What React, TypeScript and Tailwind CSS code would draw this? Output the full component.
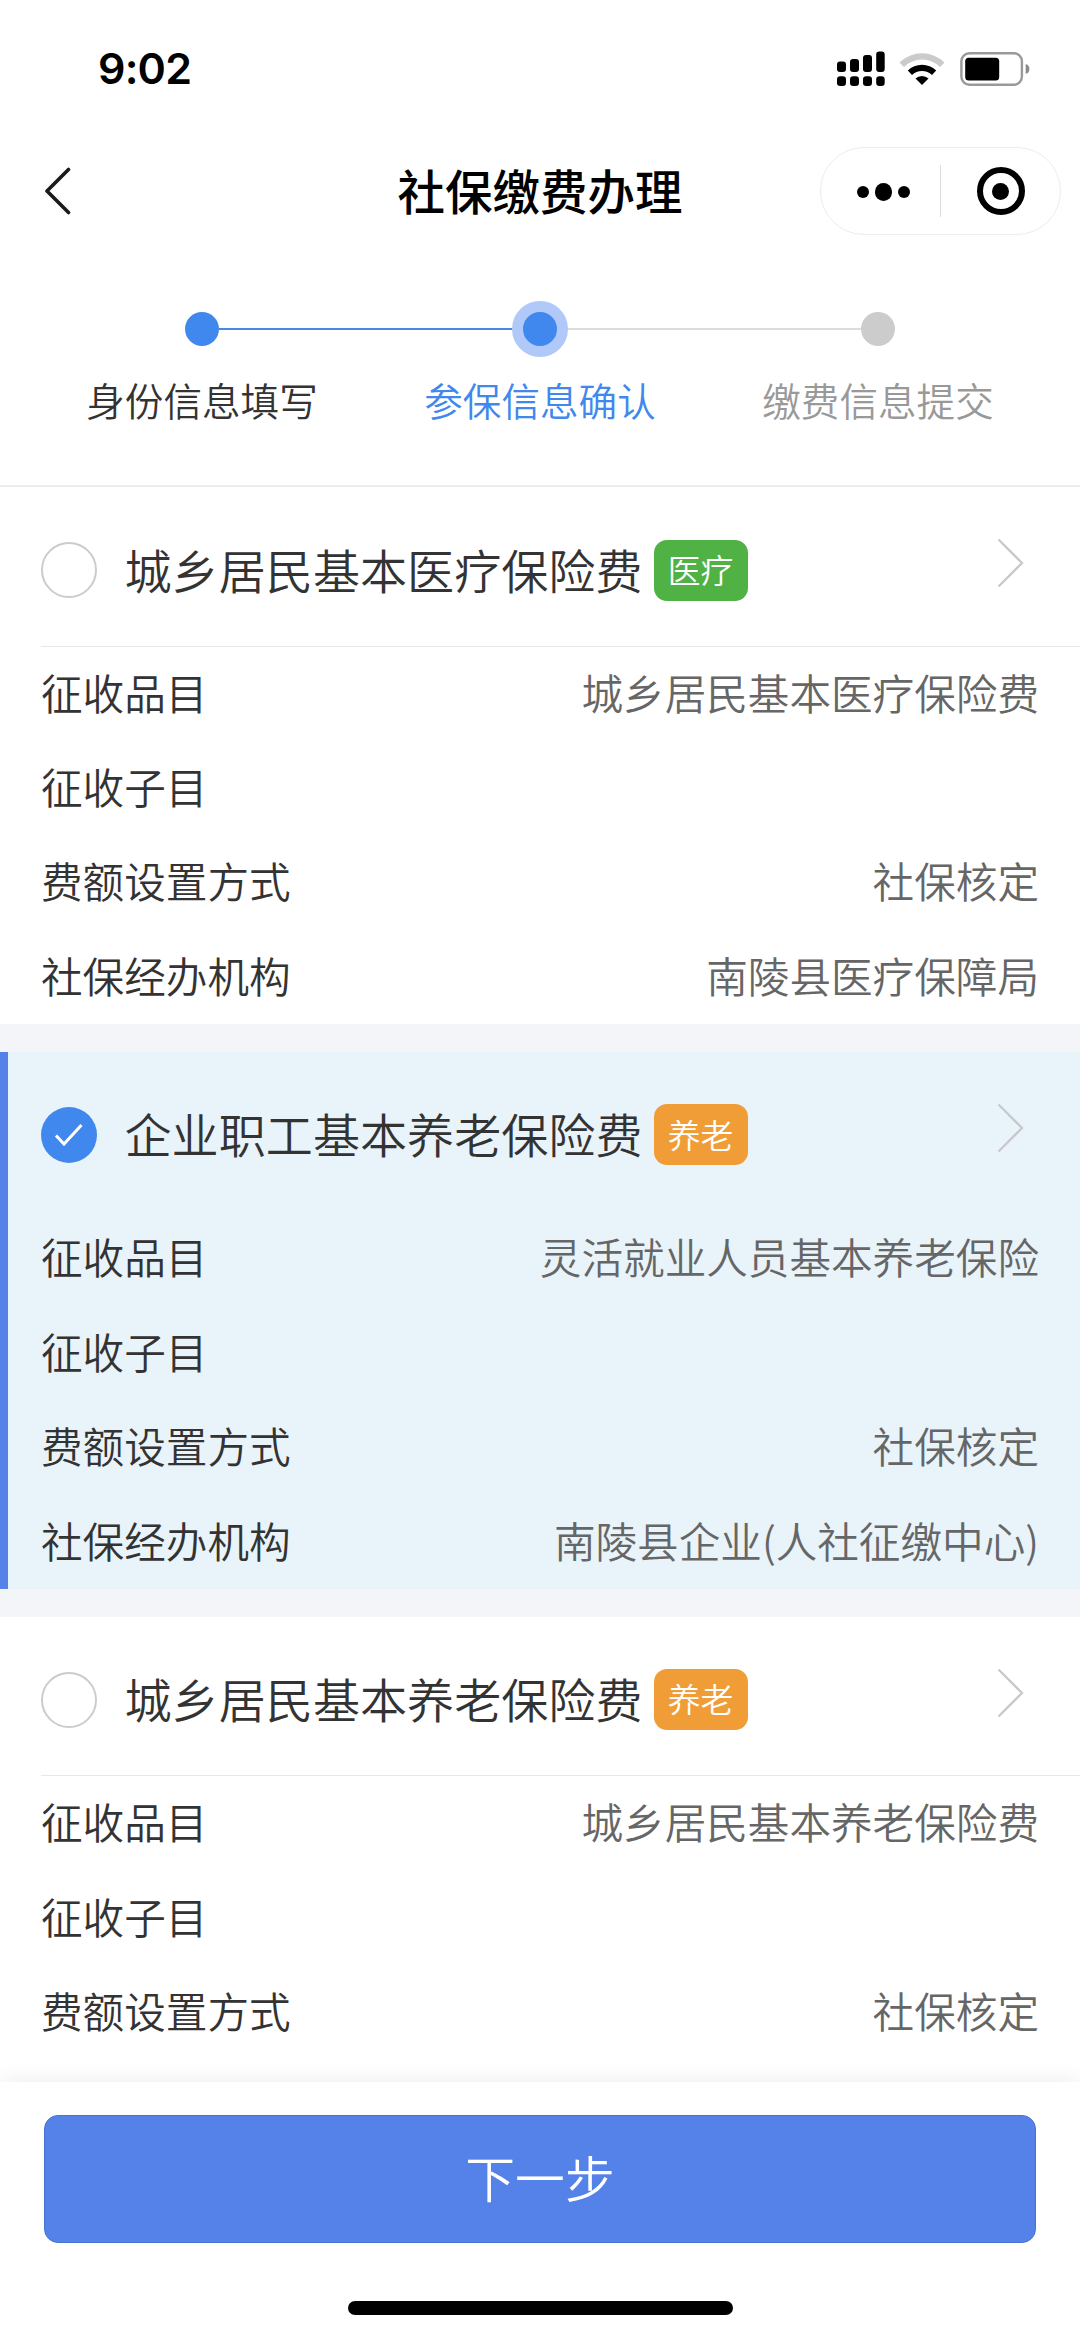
import clsx from 'clsx';

interface Field {
  label: string;
  value: string;
}

interface Insurance {
  title: string;
  tag: '医疗' | '养老';
  fields: Field[];
}

const steps = ['身份信息填写', '参保信息确认', '缴费信息提交'];
const currentStep = 1;
const selectedIndex = 1;

const insurances: Insurance[] = [
  {
    title: '城乡居民基本医疗保险费',
    tag: '医疗',
    fields: [
      { label: '征收品目', value: '城乡居民基本医疗保险费' },
      { label: '征收子目', value: '' },
      { label: '费额设置方式', value: '社保核定' },
      { label: '社保经办机构', value: '南陵县医疗保障局' },
    ],
  },
  {
    title: '企业职工基本养老保险费',
    tag: '养老',
    fields: [
      { label: '征收品目', value: '灵活就业人员基本养老保险' },
      { label: '征收子目', value: '' },
      { label: '费额设置方式', value: '社保核定' },
      { label: '社保经办机构', value: '南陵县企业(人社征缴中心)' },
    ],
  },
  {
    title: '城乡居民基本养老保险费',
    tag: '养老',
    fields: [
      { label: '征收品目', value: '城乡居民基本养老保险费' },
      { label: '征收子目', value: '' },
      { label: '费额设置方式', value: '社保核定' },
    ],
  },
];

const SignalIcon = () => (
  <svg width="48" height="35" viewBox="0 0 48 35">
    <rect x="0" y="10.5" width="9" height="10.5" rx="3" />
    <rect x="13" y="8" width="9" height="13" rx="3" />
    <rect x="26" y="4" width="9" height="17" rx="3" />
    <rect x="39.2" y="0.5" width="8.5" height="20.5" rx="3" />
    <rect x="0" y="25.3" width="9" height="9.7" rx="3.2" />
    <rect x="13" y="25.3" width="9" height="9.7" rx="3.2" />
    <rect x="26" y="25.3" width="9" height="9.7" rx="3.2" />
    <rect x="39.2" y="25.3" width="8.5" height="9.7" rx="3.2" />
  </svg>
);

const WifiIcon = () => (
  <svg width="46" height="34" viewBox="0 0 46 34">
    <path d="M0.5 10.5 A32 32 0 0 1 45.5 10.5 L41 15 A25.6 25.6 0 0 0 5 15 Z" fill="#cbcbcb" />
    <path d="M8.8 18.6 A20.3 20.3 0 0 1 37.2 18.6 L33 23 A14.2 14.2 0 0 0 13 23 Z" />
    <path d="M16.5 26.5 A9.4 9.4 0 0 1 29.5 26.5 L23 33 Z" />
  </svg>
);

const BatteryIcon = () => (
  <svg width="70" height="34" viewBox="0 0 70 34">
    <rect x="1.4" y="1.2" width="60.5" height="31.6" rx="8" fill="none" stroke="#999" strokeWidth="2.4" />
    <rect x="5.2" y="5.7" width="34" height="22.7" rx="3.5" />
    <path d="M65.7 12 Q69.4 13.2 69.4 17 Q69.4 20.8 65.7 22 Z" fill="#8a8a8a" />
  </svg>
);

const StatusBar = () => (
  <div className="flex h-[137px] items-center justify-between pl-[98px] pr-[50px]">
    <span className="font-['Inter',sans-serif] text-[43px] font-semibold leading-none tracking-[-0.8px]">9:02</span>
    <div className="flex items-center">
      <SignalIcon />
      <div className="ml-[14px] mr-[15px]">
        <WifiIcon />
      </div>
      <BatteryIcon />
    </div>
  </div>
);

const NavBar = () => (
  <header className="mt-[10px] grid h-[88px] grid-cols-[1fr_auto_1fr] items-center px-[19px]">
    <svg className="ml-[25px]" width="28" height="48" viewBox="0 0 28 48" fill="none">
      <path d="M24.5 2.5 L3 24 L24.5 45.5" stroke="#1a1a1a" strokeWidth="3.6" strokeLinecap="round" strokeLinejoin="round" />
    </svg>
    <h1 className="pb-[3px] text-[47.5px] font-medium leading-none">社保缴费办理</h1>
    <div className="flex h-[88px] w-[241px] items-center justify-self-end rounded-full border border-[#ececec]">
      <div className="flex w-[119px] items-center justify-center gap-[6px] pl-[6px] pt-[2px]">
        <span className="size-[11.5px] rounded-full bg-black" />
        <span className="size-[17.5px] rounded-full bg-black" />
        <span className="size-[11.5px] rounded-full bg-black" />
      </div>
      <span className="h-[52px] w-px bg-[#dcdcdc]" />
      <div className="flex flex-1 justify-center">
        <span className="flex size-[48px] items-center justify-center rounded-full border-6 border-black">
          <span className="size-[17px] rounded-full bg-black" />
        </span>
      </div>
    </div>
  </header>
);

const StepBar = () => (
  <div className="flex h-[252px] justify-center border-b-2 border-[#ededed] pt-[66px]">
    {steps.map((step, i) => (
      <div key={step} className="flex w-[338px] flex-col items-center">
        <div className="flex h-[56px] w-full items-center">
          <span
            className={clsx('h-[2.5px] flex-1', i === 0 && 'bg-transparent', i > 0 && (i <= currentStep ? 'bg-[#4787e6]' : 'bg-[#dcdcdc]'))}
          />
          <span
            className={clsx(
              'rounded-full',
              i < currentStep && 'size-[34px] bg-[#4087ee]',
              i === currentStep && 'size-[56px] border-11 border-[#b0c9f8] bg-[#4087ee]',
              i > currentStep && 'size-[34px] bg-[#ccc]'
            )}
          />
          <span
            className={clsx('h-[2.5px] flex-1', i === 2 && 'bg-transparent', i < 2 && (i < currentStep ? 'bg-[#4787e6]' : 'bg-[#dcdcdc]'))}
          />
        </div>
        <span
          className={clsx(
            'mt-[22px] text-[38.6px] font-[350] leading-[40px]',
            i < currentStep && 'text-[#333]',
            i === currentStep && 'text-[#4087ee]',
            i > currentStep && 'text-[#999]'
          )}
        >
          {step}
        </span>
      </div>
    ))}
  </div>
);

const Radio = ({ checked }: { checked: boolean }) =>
  checked ? (
    <span className="flex size-[56px] items-center justify-center rounded-full bg-[#4087ee]">
      <svg width="30" height="24" viewBox="0 0 30 24" fill="none">
        <path d="M2 12.5 L10 21 L27.5 2" stroke="#fff" strokeWidth="3" />
      </svg>
    </span>
  ) : (
    <span className="size-[56px] rounded-full border-[2.5px] border-[#ccc]" />
  );

const InsuranceCard = ({ item, selected }: { item: Insurance; selected: boolean }) => (
  <section className={clsx('border-l-8 pl-[33px]', selected ? 'border-[#5482e9] bg-[#e9f4fa]' : 'border-white bg-white')}>
    <div className={clsx('flex h-[159.2px] items-center border-b pt-[7px] pr-[56px]', selected ? 'border-[#e6f1f8]' : 'border-[#e8e8e8]')}>
      <Radio checked={selected} />
      <h2 className="ml-[27.5px] pb-[4px] text-[47.1px] font-[350] leading-none text-[#333]">{item.title}</h2>
      <span
        className={clsx(
          'ml-[11px] flex h-[61px] w-[94px] items-center justify-center rounded-[13px] pb-[2px] text-[32.8px] font-[350] leading-none text-white',
          item.tag === '医疗' ? 'bg-[#50b145]' : 'bg-[#f09d38]'
        )}
      >
        {item.tag}
      </span>
      <svg className="mb-[14px] ml-auto" width="27" height="50" viewBox="0 0 27 50" fill="none">
        <path d="M1.5 1.5 L25 25 L1.5 48.5" stroke="#c8c9cc" strokeWidth="2.3" />
      </svg>
    </div>
    <dl>
      {item.fields.map(({ label, value }) => (
        <div
          key={label}
          className="flex h-[94.4px] items-center justify-between pr-[41px] pb-[3px] text-[41.6px] font-[350] leading-none"
        >
          <dt className="text-[#333]">{label}</dt>
          <dd className="text-[#666]">{value}</dd>
        </div>
      ))}
    </dl>
  </section>
);

export default function App() {
  return (
    <div className="flex h-[2337px] w-[1080px] flex-col overflow-hidden bg-white font-['Noto_Sans_CJK_SC',sans-serif] text-black">
      <StatusBar />
      <NavBar />
      <StepBar />
      <main className="flex min-h-0 flex-1 flex-col pt-[0.6px]">
        {insurances.map((item, i) => (
          <div key={item.title} className={clsx(i > 0 && 'border-t-[28px] border-[#f4f5f9]')}>
            <InsuranceCard item={item} selected={i === selectedIndex} />
          </div>
        ))}
      </main>
      <footer className="relative flex h-[255px] flex-col items-center bg-white pt-[33px] shadow-[0_-2px_20px_rgba(0,0,0,0.07)]">
        <button className="h-[128px] w-[992px] rounded-[14px] border border-[#4874cd] bg-[#5482e9] pb-[5px] text-[49.8px] font-[350] leading-none text-white">
          下一步
        </button>
        <div className="mt-[58px] h-[14px] w-[385px] rounded-full bg-black" />
      </footer>
    </div>
  );
}
